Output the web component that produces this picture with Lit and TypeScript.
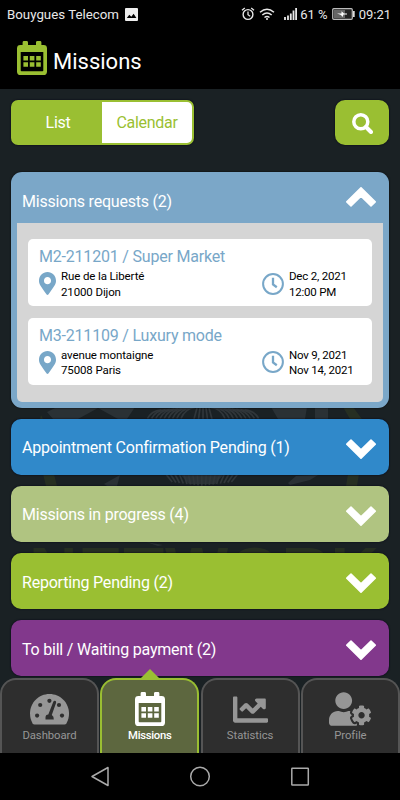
import { LitElement, html, css, svg } from "lit";
import { customElement, property } from "lit/decorators.js";

const calendar = svg`<svg class="cal" viewBox="0 0 30 34"><path fill="currentColor" fill-rule="evenodd" d="M7 0h2.600q1.400 0 1.400 1.400V4h8V1.400q0-1.400 1.400-1.400H23q1.400 0 1.400 1.400V4h2.200Q30 4 30 7.400v23Q30 34 26.400 34H3.600Q0 34 0 30.400v-23Q0 4 3.400 4h2.200V1.400Q5.600 0 7 0zM3.700 11v18.400q0 .8.800.800h21q.8 0 .8-.8V11z"/><path fill="currentColor" d="M6.400 15h4.600v4.600H6.400zM12.800 15h4.600v4.600h-4.600zM19.200 15h4.600v4.600h-4.600zM6.400 21.200h4.600v4.600H6.400zM12.800 21.200h4.600v4.600h-4.600zM19.200 21.200h4.600v4.600h-4.600z"/></svg>`;

const searchIcon = svg`<svg width="21" height="21" viewBox="0 0 21 21" fill="none" stroke="#fff"><circle cx="8.800" cy="8.800" r="7" stroke-width="3.500"/><path d="M14 14l5 5" stroke-width="4" stroke-linecap="round"/></svg>`;

const pin = svg`<svg width="17" height="23" viewBox="0 0 384 512" preserveAspectRatio="none"><path fill="currentColor" d="M172.268 501.670C26.970 291.031 0 269.413 0 192 0 85.961 85.961 0 192 0s192 85.961 192 192c0 77.413-26.970 99.031-172.268 309.670-9.535 13.774-29.930 13.773-39.464 0zM192 272c44.183 0 80-35.817 80-80s-35.817-80-80-80-80 35.817-80 80 35.817 80 80 80z"/></svg>`;

const clock = svg`<svg width="22" height="22" viewBox="0 0 22 22" fill="none" stroke="currentColor"><circle cx="11" cy="11" r="9.900" stroke-width="2"/><path d="M11 4.800v6.700l3.800 2.800" stroke-width="2.300"/></svg>`;

const chevron = (up: boolean) => svg`<svg width="30" height="20" viewBox="0 0 30 20"><path transform=${up ? "matrix(1 0 0 -1 0 20)" : ""} fill="#fff" stroke="#fff" stroke-width="1.600" stroke-linejoin="round" d="M5 1.200L15 10.800l10-9.600 4.200 4L15 19.200.8 5.200z"/></svg>`;

const gauge = svg`<svg width="39" height="31" viewBox="0 0 39 31"><path fill="currentColor" d="M19.500 0C8.700 0 0 8.700 0 19.500c0 3.700 1 7 2.500 9.800.5.8 1.200 1.200 2 1.200h30c.8 0 1.500-.4 2-1.200 1.600-2.800 2.500-6.100 2.500-9.800C39 8.700 30.300 0 19.500 0z"/><g fill="#2e2e2e"><circle cx="19.400" cy="6.800" r="2.100"/><circle cx="10.200" cy="11" r="2.100"/><circle cx="7.100" cy="21.600" r="2.100"/><circle cx="29" cy="11" r="2.100"/><circle cx="32" cy="21.600" r="2.100"/><path d="M15.500 25.500v-2.200q0-2.700 2.800-2.900L23.300 7.800q.6-1.300 1.800-1 1.400.5 1 1.900L21.800 21q2.200 1.300 2 4.500z"/></g></svg>`;

const chart = svg`<svg width="35" height="35" viewBox="0 0 512 512"><path fill="currentColor" d="M496 384H64V80c0-8.840-7.160-16-16-16H16C7.160 64 0 71.160 0 80v336c0 17.670 14.330 32 32 32h464c8.840 0 16-7.160 16-16v-32c0-8.840-7.160-16-16-16zM464 96H345.940c-21.380 0-32.090 25.850-16.970 40.970l32.400 32.400L288 242.750l-73.370-73.370c-12.500-12.500-32.760-12.500-45.250 0l-68.690 68.690c-6.250 6.250-6.250 16.380 0 22.630l22.620 22.620c6.250 6.250 16.380 6.250 22.630 0L192 237.250l73.370 73.370c12.500 12.500 32.760 12.500 45.250 0l96-96 32.400 32.400c15.120 15.120 40.970 4.410 40.970-16.970V112c.01-8.840-7.150-16-15.990-16z"/></svg>`;

const userCog = svg`<svg width="42" height="34" viewBox="0 0 640 512"><path fill="currentColor" d="M610.500 373.300c2.600-14.100 2.600-28.500 0-42.600l25.800-14.900c3-1.700 4.300-5.200 3.300-8.500-6.700-21.600-18.200-41.200-33.200-57.400-2.300-2.500-6-3.100-9-1.400l-25.800 14.900c-10.900-9.300-23.400-16.500-36.900-21.300v-29.800c0-3.400-2.400-6.400-5.700-7.100-22.300-5-45-4.800-66.200 0-3.300.7-5.700 3.700-5.700 7.100v29.800c-13.500 4.800-26 12-36.900 21.300l-25.800-14.900c-2.900-1.700-6.700-1.100-9 1.400-15 16.200-26.500 35.800-33.200 57.400-1 3.300.4 6.800 3.300 8.500l25.800 14.900c-2.600 14.100-2.600 28.500 0 42.600l-25.800 14.900c-3 1.700-4.300 5.200-3.300 8.500 6.700 21.600 18.200 41.100 33.200 57.400 2.300 2.500 6 3.100 9 1.400l25.800-14.900c10.900 9.300 23.400 16.500 36.900 21.300v29.800c0 3.400 2.400 6.400 5.700 7.100 22.300 5 45 4.800 66.200 0 3.300-.7 5.700-3.700 5.700-7.100v-29.800c13.500-4.800 26-12 36.900-21.300l25.800 14.900c2.900 1.700 6.700 1.100 9-1.400 15-16.200 26.500-35.800 33.200-57.400 1-3.300-.4-6.800-3.300-8.500l-25.800-14.900zM496 400.500c-26.800 0-48.500-21.800-48.500-48.500s21.800-48.500 48.500-48.500 48.500 21.800 48.500 48.500-21.700 48.500-48.500 48.500zM224 256c70.700 0 128-57.300 128-128S294.700 0 224 0 96 57.300 96 128s57.300 128 128 128zm201.200 226.500c-2.300-1.200-4.600-2.600-6.800-3.900l-7.900 4.600c-6 3.400-12.800 5.300-19.600 5.300-10.900 0-21.400-4.600-28.900-12.600-18.300-19.800-32.300-43.900-40.200-69.600-5.500-17.700 1.900-36.400 17.900-45.700l7.900-4.600c-.1-2.600-.1-5.200 0-7.800l-7.900-4.600c-16-9.200-23.400-28-17.900-45.700.9-2.900 2.200-5.800 3.200-8.700-3.800-.3-7.500-1.200-11.400-1.200h-16.700c-22.200 10.200-46.900 16-72.900 16s-50.600-5.800-72.900-16h-16.700C60.200 288 0 348.200 0 422.400V464c0 26.500 21.500 48 48 48h352c10.100 0 19.500-3.200 27.200-8.500-1.200-3.800-2-7.700-2-11.800v-9.200z"/></svg>`;

/* Faded crest behind the list: emblem shapes, fur, ring and lettering. */
const fur = [-1, 1].flatMap((side) =>
  Array.from({ length: 9 }, (_, i) => {
    const x = 203 + side * (8 + i * 4.200);
    return svg`<path d="M${x} ${407.500 + i * 0.300}q${side * 10} 1 ${side * 14} ${11 - i * 0.300}"/>`;
  })
);
const crown = Array.from({ length: 5 }, (_, i) => svg`<path d="M${197 + i * 3} 408l${(i - 2) * 1.500} 11"/>`);
const beard = Array.from({ length: 17 }, (_, i) => {
  const x = 165 + i * 4.600;
  return svg`<path d="M${x} 473l${(8 - i) * 0.900} ${13 - Math.abs(i - 8) * 0.500}"/>`;
});
const crest = svg`<svg class="crest" viewBox="0 89 400 664"><g fill="#2a3135"><path d="M47 412l10-5h78l-8 12H53zM271 407h36l-2 12h-27zM315 407h13v12h-13zM104 484l16-9-3 11h-10zM288 483l8-7 22-1-8 5-20 5zM146 542l17 3-5 1zM180 474h44l-9 10h-26z"/></g><path fill="#1a2023" d="M78 419l20-11 20 11z"/><g stroke="#30363a" stroke-width="1.700" fill="none">${fur}${crown}${beard}</g><path fill="#262f22" d="M343 407h10l9 12h-12zM346 486l2-12h11l-2 12zM43 474h11l3 12H46zM41 415l2 4h-3z"/><text x="29" y="593.500" textLength="350" font-family="Liberation Sans" font-weight="700" font-size="67" fill="#262f22">NETWORK</text></svg>`;

@customElement("mission-card")
class MissionCard extends LitElement {
  @property() name = "";
  @property({ attribute: false }) place: string[] = [];
  @property({ attribute: false }) time: string[] = [];
  static styles = css`
    :host { display: block; box-sizing: border-box; height: 67px; background: #fff; border-radius: 5px; padding: 8px 0 0 11px; color: #78a7c8; }
    .name { font-size: 16px; line-height: 19px; letter-spacing: -0.200px; white-space: nowrap; }
    .info { display: grid; grid-template-columns: 22px 200.500px 27.500px 1fr; align-items: center; margin-top: 2px; }
    .lines { font-size: 11.500px; line-height: 15.500px; letter-spacing: -0.200px; color: #000; white-space: nowrap; padding-top: 1px; }
    .place { letter-spacing: -0.120px; }
    svg { display: block; margin-top: -1px; }
  `;
  render() {
    return html`<div class="name">${this.name}</div>
      <div class="info">${pin}<div class="lines place">${this.place.map((l) => html`<div>${l}</div>`)}</div>${clock}<div class="lines">${this.time.map((l) => html`<div>${l}</div>`)}</div></div>`;
  }
}

@customElement("app-root")
class AppRoot extends LitElement {
  static styles = css`
    :host { display: flex; flex-direction: column; position: relative; width: 400px; height: 800px; overflow: hidden; background: #000; color: #fff; font-family: Roboto, sans-serif; }
    * { box-sizing: border-box; }
    svg { display: block; flex: none; }
    .status { height: 28px; flex: none; display: flex; align-items: center; padding: 0 9px 0 7px; font-size: 13px; color: #e8e8e8; white-space: nowrap; }
    .carrier { font-size: 13.300px; }
    .photo { margin-left: 6px; }
    .signals { margin-left: auto; }
    .level { margin-left: 3px; }
    .battery, .time { margin-left: 4px; }
    .title { height: 61px; flex: none; display: flex; align-items: center; padding: 0 0 2px 17px; gap: 6px; }
    .title h1 { margin: 8px 0 0; font-size: 22px; line-height: 28px; font-weight: 400; }
    .cal { width: 30px; height: 34px; }
    .title .cal { color: #9abf32; }
    .body { position: relative; flex: none; height: 664px; background: #1a2124; padding: 11px 11px 0; overflow: hidden; }
    .crest { position: absolute; left: 0; top: 0; width: 400px; height: 664px; }
    .content { position: relative; }
    .tools { display: flex; justify-content: space-between; height: 45px; }
    .toggle { display: flex; width: 183px; border: 2px solid #9abf32; border-radius: 7px; background: #9abf32; box-shadow: 0 0 2px #000015; font-size: 16px; letter-spacing: -0.300px; line-height: 42px; text-align: center; }
    .toggle .on { width: 89px; padding-left: 1px; }
    .toggle .off { flex: 1; background: #fff; color: #9abf32; border-radius: 0 5px 5px 0; }
    .search { width: 54px; display: flex; align-items: center; justify-content: center; border-radius: 10px; background: #9abf32; box-shadow: 0 0 2px #000015; }
    .search svg { margin-top: 1px; }
    .list { display: flex; flex-direction: column; gap: 11.200px; margin-top: 27px; }
    .head { display: flex; align-items: center; justify-content: space-between; height: 56px; padding: 2px 13px 0 11px; border-radius: 10px; font-size: 16px; letter-spacing: -0.210px; box-shadow: 0 0 2px #000015; white-space: nowrap; }
    .head svg { margin-top: 2px; }
    .open { height: 235.500px; border-radius: 11px; background: #7ba7c8; padding: 0 6px 6px; box-shadow: 0 0 2px #000; }
    .open .head { height: 51px; padding: 7px 7px 0 5px; box-shadow: none; }
    .open .head svg { margin: -8px 0 0; }
    .cards { height: 178.500px; background: #d5d5d5; padding: 16px 11px; display: flex; flex-direction: column; gap: 11.500px; border-radius: 0 0 5px 5px; }
    .blue { background: #3089ca; }
    .sage { background: #b0c481; }
    .green { background: #9abf32; }
    .purple { background: #82388c; }
    .tabs { position: absolute; left: 0; right: 0; top: 678px; display: grid; grid-template-columns: repeat(4, 99px); column-gap: 1.300px; height: 75px; }
    .tab { position: relative; border: 2px solid #555; border-bottom: 0; border-radius: 16px 16px 0 0; background: #2e2e2e; color: #969696; display: flex; flex-direction: column; align-items: center; font-size: 11.300px; letter-spacing: -0.050px; }
    .icon { display: flex; align-items: center; padding-top: 12px; height: 46px; }
    .label { line-height: 18px; margin-top: 1px; }
    .active { border-color: #9abf32; background: #5d673f; color: #fff; font-weight: 500; letter-spacing: -0.300px; }
    .active::before { content: ""; position: absolute; top: -11px; left: 39px; border: solid transparent; border-width: 0 9px 9px; border-bottom-color: #9abf32; }
    .nav { height: 47px; }
  `;

  render() {
    const sections = [
      ["Appointment Confirmation Pending (1)", "blue"],
      ["Missions in progress (4)", "sage"],
      ["Reporting Pending (2)", "green"],
      ["To bill / Waiting payment (2)", "purple"],
    ];
    return html`
      <div class="status">
        <span class="carrier">Bouygues Telecom</span>
        <svg class="photo" width="13" height="13" viewBox="0 0 13 13"><rect width="13" height="13" rx="1" fill="#eee" /><path d="M1.800 10l2.500-3.200 2 2 2.300-3 2.800 4.200z" /></svg>
        <svg class="signals" width="58" height="16" viewBox="0 0 58 16" fill="none" stroke="#e8e8e8">
          <circle cx="9" cy="8.500" r="4.900" stroke-width="1.400" /><path d="M9 5.500v3.200l2.200 1.500M3 4.300L5.800 2M15 4.300L12.200 2" stroke-width="1.300" />
          <path d="M21 6.200q7-6 14 0M23.300 9q4.700-4 9.400 0M25.500 11.500q2.500-2 5 0" stroke-width="1.500" /><circle cx="28" cy="13" r="1" fill="#e8e8e8" stroke="none" />
          <path d="M46 14v-3M49 14V9.500M51.800 14V7.500M54.500 14V4.500M57.100 14V2" stroke-width="1.800" />
        </svg>
        <span class="level">61 %</span>
        <svg class="battery" width="23" height="12" viewBox="0 0 23 12"><rect x=".7" y=".7" width="19.600" height="10.600" rx="1" fill="#222" stroke="#bbb" stroke-width="1.200" /><path fill="#666" d="M2 2h11v8H2z" /><path fill="#ddd" d="M21 3h1.700v6H21z" /><path fill="#fff" d="M5 5.500h4.500V3.200l2.500 2.300h3v1h-3.500L10.500 9 9 7z" /></svg>
        <span class="time">09:21</span>
      </div>
      <div class="title">${calendar}<h1>Missions</h1></div>
      <div class="body">
        ${crest}
        <div class="content">
          <div class="tools">
            <div class="toggle"><div class="on">List</div><div class="off">Calendar</div></div>
            <div class="search">${searchIcon}</div>
          </div>
          <div class="list">
            <div class="open">
              <div class="head"><span>Missions requests (2)</span>${chevron(true)}</div>
              <div class="cards">
                <mission-card name="M2-211201 / Super Market" .place=${["Rue de la Liberté", "21000 Dijon"]} .time=${["Dec 2, 2021", "12:00 PM"]}></mission-card>
                <mission-card name="M3-211109 / Luxury mode" .place=${["avenue montaigne", "75008 Paris"]} .time=${["Nov 9, 2021", "Nov 14, 2021"]}></mission-card>
              </div>
            </div>
            ${sections.map(([label, tone]) => html`<div class="head ${tone}"><span>${label}</span>${chevron(false)}</div>`)}
          </div>
        </div>
      </div>
      <div class="tabs">
        <div class="tab"><div class="icon">${gauge}</div><div class="label">Dashboard</div></div>
        <div class="tab active"><div class="icon">${calendar}</div><div class="label">Missions</div></div>
        <div class="tab"><div class="icon">${chart}</div><div class="label">Statistics</div></div>
        <div class="tab"><div class="icon">${userCog}</div><div class="label">Profile</div></div>
      </div>
      <svg class="nav" width="400" height="47" viewBox="0 753 400 47" fill="none" stroke="#aaa" stroke-width="1.500" stroke-linejoin="round">
        <path d="M108 767.500v18l-16-9z" /><circle cx="200" cy="776.500" r="9.300" /><rect x="291.800" y="768.200" width="16.500" height="16.800" rx=".5" />
      </svg>
    `;
  }
}
